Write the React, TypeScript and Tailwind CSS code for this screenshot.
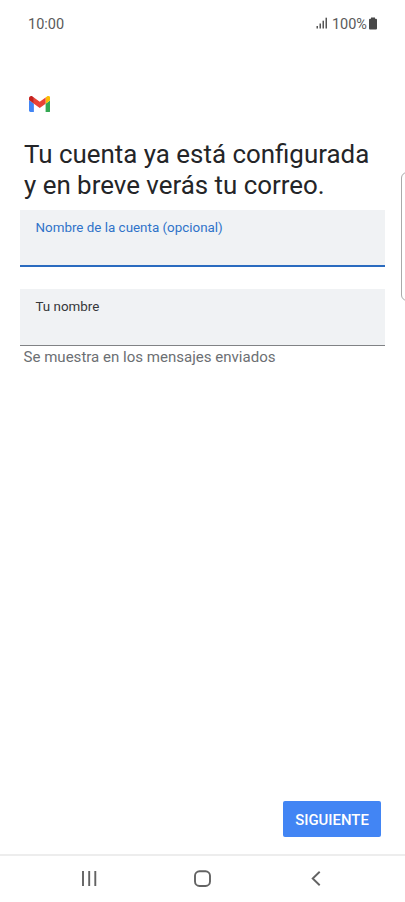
function GmailLogo() {
  return (
    <svg viewBox="52 42 88 66" preserveAspectRatio="none" className="ml-[28.500px] h-4 w-[21.500px]" aria-label="Gmail">
      <path fill="#4285f4" d="M58 108h14V74L52 59v43c0 3.320 2.690 6 6 6" />
      <path fill="#34a853" d="M120 108h14c3.320 0 6-2.690 6-6V59l-20 15" />
      <path fill="#fbbc04" d="M120 48v26l20-15v-8c0-7.420-8.470-11.650-14.400-7.200" />
      <path fill="#ea4335" d="M72 74V48l24 18 24-18v26L96 92" />
      <path fill="#c5221f" d="M52 51v8l20 15V48l-5.600-4.200c-5.940-4.450-14.400-.220-14.400 7.200" />
    </svg>
  );
}

function StatusBar() {
  return (
    <header className="flex h-12 items-center justify-between pr-[27px] pl-7 text-[14.5px] text-[#5a5a5a]">
      <span className="pt-px">10:00</span>
      <div className="flex items-center">
        <svg viewBox="0 0 12 12" className="mb-0.5 h-3 w-3" fill="#555">
          <rect x="0.500" y="9" width="1.500" height="2.500" />
          <rect x="3.500" y="6.500" width="1.500" height="5" />
          <rect x="6.500" y="3.700" width="1.500" height="7.800" />
          <rect x="9.500" y="0.700" width="1.500" height="10.800" />
        </svg>
        <span className="ml-1 pt-px text-[14.5px] leading-5">100%</span>
        <svg viewBox="0 0 9 13" className="mb-0.5 ml-px h-[13px] w-[10px]" fill="#484848">
          <path d="M2.500 0.500h4v1.300h1a1 1 0 0 1 1 1v8.700a1 1 0 0 1-1 1h-6a1 1 0 0 1-1-1V2.800a1 1 0 0 1 1-1h1z" />
        </svg>
      </div>
    </header>
  );
}

function NavigationBar() {
  return (
    <nav className="flex h-12 items-center border-t-2 border-[#ededed] text-[#636363]">
      <svg viewBox="0 0 405 46" className="h-[46px] w-full" fill="none" stroke="currentColor" strokeWidth="1.900">
        <path d="M83 15v15M89.200 15v15M95.300 15v15" />
        <rect x="195" y="15.300" width="15" height="14.700" rx="4.500" />
        <path d="M319.700 15.700l-7 6.800 7 6.800" />
      </svg>
    </nav>
  );
}

export default function App() {
  return (
    <div className="relative flex h-[902px] w-[405px] flex-col overflow-hidden bg-white font-[Roboto,sans-serif]">
      <StatusBar />
      <main className="flex flex-1 flex-col pt-12">
        <GmailLogo />
        <h1 className="mt-[27px] ml-6 text-[25.900px] leading-[30.5px] whitespace-nowrap text-[#242528]">
          Tu cuenta ya está configurada<br />y en breve verás tu correo.
        </h1>
        <label className="mt-[10px] mr-5 ml-[19.500px] flex h-[57px] flex-col border-b-2 border-[#2a6bbf] bg-[#f0f2f4] pt-2 pl-4 text-[13.400px] leading-5 text-[#2f72c9]">
          Nombre de la cuenta (opcional)
        </label>
        <label className="mt-[22px] mr-5 ml-[19.500px] flex h-[57px] flex-col border-b border-[#808285] bg-[#f0f2f4] pt-2 pl-4 text-[13.400px] leading-5 text-[#35373a]">
          Tu nombre
        </label>
        <p className="mt-px ml-[23.500px] text-[15.050px] leading-5 text-[#6c6f73]">Se muestra en los mensajes enviados</p>
        <button className="mt-auto mr-6 mb-[17px] h-9 w-[98px] self-end rounded-xs bg-[#4285f4] pt-0.5 text-[14.900px] font-medium text-white">
          SIGUIENTE
        </button>
      </main>
      <NavigationBar />
      <div className="absolute top-[172px] -right-1 h-[129px] w-2 rounded-l-md border border-[#aaa] bg-white" />
    </div>
  );
}
